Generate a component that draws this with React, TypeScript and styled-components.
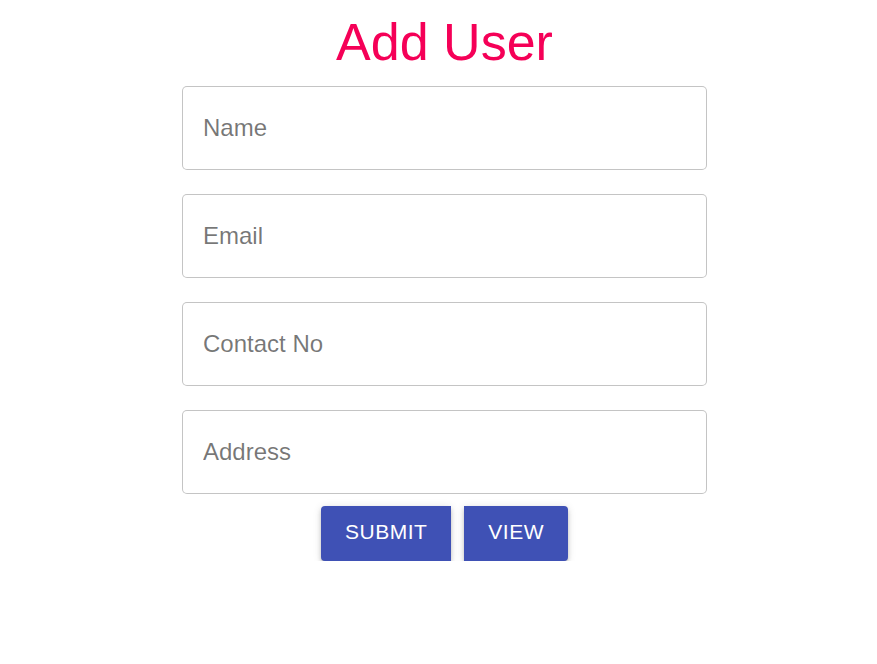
import React from "react";
import styled, { createGlobalStyle } from "styled-components";

const Global = createGlobalStyle`
  html, body { margin: 0; padding: 0; background: #fff; }
  body { font-family: "Liberation Sans", Arial, sans-serif; }
`;

const Page = styled.div`
  display: flex;
  flex-direction: column;
  align-items: center;
  padding-left: 12px;
  padding-top: 12px;
`;

const Title = styled.h1`
  margin: 0 0 14px;
  font-family: "Liberation Sans", Arial, sans-serif;
  font-weight: 400;
  font-size: 52px;
  line-height: 60px;
  color: #f50057;
`;

const Form = styled.form`
  width: 525px;
  display: flex;
  flex-direction: column;
  gap: 24px;
`;

const Field = styled.input`
  box-sizing: border-box;
  width: 100%;
  height: 84px;
  padding: 0 20px;
  border: 1px solid rgba(0, 0, 0, 0.23);
  border-radius: 5px;
  font-family: "Liberation Sans", Arial, sans-serif;
  font-size: 24px;
  color: rgba(0, 0, 0, 0.87);
  outline: none;
  background: #fff;
  &::placeholder {
    color: rgba(0, 0, 0, 0.54);
  }
`;

const Actions = styled.div`
  display: flex;
  justify-content: center;
  gap: 13px;
  margin-top: 12px;
`;

const Button = styled.button<{ $side: "left" | "right" }>`
  height: 55px;
  padding: 0 24px 3px;
  border: none;
  border-radius: ${(p) => (p.$side === "left" ? "4px 0 0 4px" : "0 4px 4px 0")};
  background: #3f51b5;
  color: #fff;
  font-family: "Liberation Sans", Arial, sans-serif;
  font-size: 21px;
  letter-spacing: 0.5px;
  text-transform: uppercase;
  cursor: pointer;
  box-shadow: 0px 3px 3px -2px rgba(0, 0, 0, 0.25), 0px 3px 4px 0px rgba(0, 0, 0, 0.16),
    0px 1px 8px 0px rgba(0, 0, 0, 0.12);
`;

export default function App() {
  return (
    <>
      <Global />
      <Page>
        <Title>Add User</Title>
        <Form onSubmit={(e) => e.preventDefault()}>
          <Field placeholder="Name" />
          <Field placeholder="Email" />
          <Field placeholder="Contact No" />
          <Field placeholder="Address" />
        </Form>
        <Actions>
          <Button $side="left">Submit</Button>
          <Button $side="right">View</Button>
        </Actions>
      </Page>
    </>
  );
}
